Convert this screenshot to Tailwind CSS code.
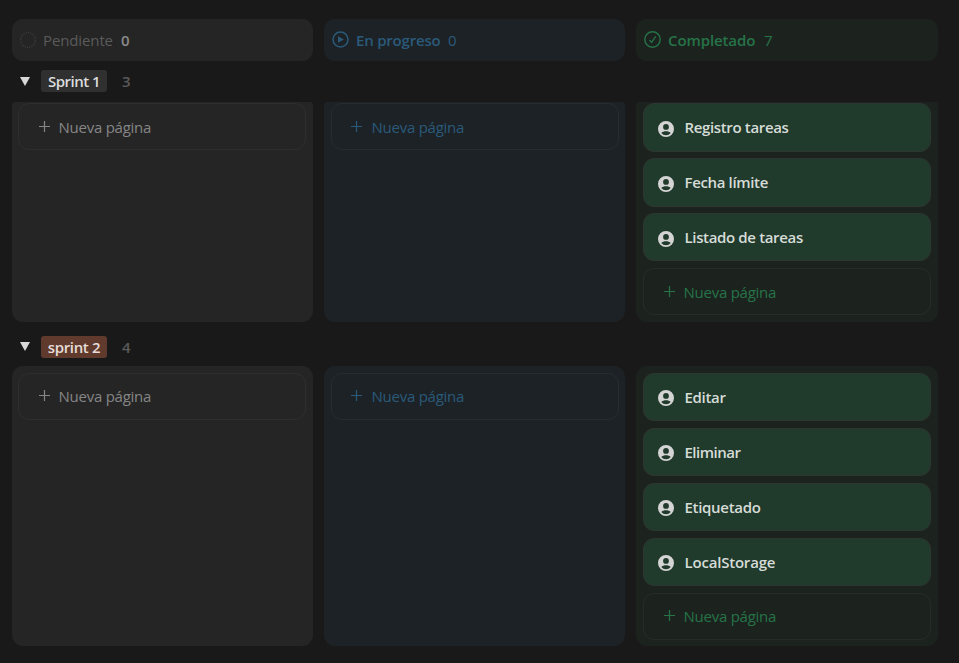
<!DOCTYPE html>
<html lang="es">
<head>
<meta charset="utf-8">
<title>Tablero de sprints</title>
<script src="https://cdn.jsdelivr.net/npm/@tailwindcss/browser@4"></script>
</head>
<body class="bg-[#191919] font-['Open_Sans','Noto_Sans',sans-serif] text-[15px] leading-5 w-[959px] h-[663px] overflow-hidden">
<svg class="hidden">
  <symbol id="plus" viewBox="0 0 10 10"><path d="M5 0v10M0 5h10" stroke="currentColor" stroke-width="1.1" fill="none"/></symbol>
  <symbol id="user" viewBox="0 0 16 16"><path fill-rule="evenodd" fill="currentColor" d="M8 0a8 8 0 1 0 0 16A8 8 0 0 0 8 0Zm0 3a2.900 2.900 0 1 1 0 5.800A2.900 2.900 0 0 1 8 3Zm0 11.200a6.100 6.100 0 0 1-4.700-2.200C4 10.800 6.300 10.200 8 10.200s4 .6 4.700 1.800A6.100 6.100 0 0 1 8 14.200Z"/></symbol>
</svg>
<main class="pt-[19px] pl-3">
  <header class="flex gap-[11px] h-[42px]">
    <div class="w-[301px] rounded-[11px] bg-[#252525] text-[#5a5a5a] flex items-center pl-2">
      <svg class="size-4 text-[#404040]" viewBox="0 0 16 16" fill="none" stroke="currentColor"><circle cx="8" cy="8" r="7.400" stroke-width="1.100" stroke-dasharray="1.2 1.1"/></svg>
      <span class="ml-[7px] w-[78px] font-medium tracking-[-0.120px]">Pendiente</span><span class="text-[#8a8a8a] font-semibold">0</span>
    </div>
    <div class="w-[301px] rounded-[11px] bg-[#1d2226] text-[#2a5a7a] flex items-center pl-2">
      <svg class="size-[17px] -mt-px" viewBox="0 0 17 17" fill="none" stroke="currentColor"><circle cx="8.500" cy="8.500" r="7.500" stroke-width="1.500"/><path d="M6 5.200v6.600l5.800-3.300z" fill="currentColor" stroke="none"/></svg>
      <span class="ml-[7px] w-[92px] font-semibold tracking-[-0.200px]">En progreso</span><span>0</span>
    </div>
    <div class="w-[302px] rounded-[11px] bg-[#1c231f] text-[#267348] flex items-center pl-2">
      <svg class="size-[17px] -mt-px" viewBox="0 0 17 17" fill="none" stroke="currentColor"><circle cx="8.500" cy="8.500" r="7.700" stroke-width="1.400"/><path d="m5.500 9 2.200 2.400 4-6" stroke-width="1.300"/></svg>
      <span class="ml-[7px] w-[96px] font-semibold tracking-[-0.100px]">Completado</span><span>7</span>
    </div>
  </header>

  <section>
    <div class="flex items-center h-[41px] pl-2 text-[#5a5a5a]">
      <svg class="w-[10px] h-[9px] text-[#d8d8d8]" viewBox="0 0 10 9"><path d="M0 0h10L5 9z" fill="currentColor"/></svg>
      <span class="ml-[11px] w-[66px] h-[22px] -mt-px leading-[23px] rounded-[3px] bg-[#303030] text-[#dcdcdc] text-center font-semibold tracking-[-0.500px]">Sprint 1</span>
      <span class="ml-[15px] -mt-0.5 font-semibold">3</span>
    </div>
    <div class="flex gap-[11px] h-[220px]">
      <div class="w-[301px] rounded-t-[3px] rounded-b-[11px] bg-[#252525] pt-px pl-[6px]">
        <div class="w-[288px] h-[47px] rounded-[11px] border border-[#2e2e2e] text-[#858585] flex items-center pl-5"><svg class="size-[11px] -mt-px"><use href="#plus"/></svg><span class="ml-[8.500px] tracking-[-0.250px]">Nueva página</span></div>
      </div>
      <div class="w-[301px] rounded-t-[3px] rounded-b-[11px] bg-[#1d2226] pt-px pl-[7px]">
        <div class="w-[288px] h-[47px] rounded-[11px] border border-[#282c2f] text-[#2a5a7a] flex items-center pl-[19px]"><svg class="size-[11px] -mt-px"><use href="#plus"/></svg><span class="ml-[9.500px] tracking-[-0.250px]">Nueva página</span></div>
      </div>
      <div class="w-[302px] rounded-t-[3px] rounded-b-[11px] bg-[#1c231f] pt-px pl-[7px] text-[#d6dcd8] font-semibold tracking-[-0.350px]">
        <div class="w-[288px] h-[49px] rounded-[11px] border border-[#2e3632] bg-[#203a2b] flex items-center pl-[14px]"><svg class="size-4 mt-[3px] text-[#d4d4d4]"><use href="#user"/></svg><span class="ml-[10.500px] -mt-0.5">Registro tareas</span></div>
        <div class="mt-[6px] w-[288px] h-[49px] rounded-[11px] border border-[#2e3632] bg-[#203a2b] flex items-center pl-[14px]"><svg class="size-4 mt-[3px] text-[#d4d4d4]"><use href="#user"/></svg><span class="ml-[10.500px] -mt-0.5">Fecha límite</span></div>
        <div class="mt-[6px] w-[288px] h-[48px] rounded-[11px] border border-[#2e3632] bg-[#203a2b] flex items-center pl-[14px]"><svg class="size-4 mt-[3px] text-[#d4d4d4]"><use href="#user"/></svg><span class="ml-[10.500px]">Listado de tareas</span></div>
        <div class="mt-[7px] w-[288px] h-[47px] rounded-[11px] border border-[#282c29] text-[#267348] font-normal flex items-center pl-5"><svg class="size-[11px] -mt-px"><use href="#plus"/></svg><span class="ml-[8.500px] tracking-[-0.250px]">Nueva página</span></div>
      </div>
    </div>
  </section>

  <section>
    <div class="flex items-center h-[44px] pt-[6px] pl-2 text-[#5a5a5a]">
      <svg class="w-[10px] h-[9px] -mt-0.5 text-[#d8d8d8]" viewBox="0 0 10 9"><path d="M0 0h10L5 9z" fill="currentColor"/></svg>
      <span class="ml-[11px] w-[66px] h-[22px] leading-[23px] rounded-[3px] bg-[#603a2d] text-[#e6ddd9] text-center font-semibold tracking-[-0.350px]">sprint 2</span>
      <span class="ml-[15px] font-semibold">4</span>
    </div>
    <div class="flex gap-[11px] h-[280px]">
      <div class="w-[301px] rounded-[11px] bg-[#252525] pt-[7px] pl-[6px]">
        <div class="w-[288px] h-[47px] rounded-[11px] border border-[#2e2e2e] text-[#858585] flex items-center pl-5 pb-0.5"><svg class="size-[11px]"><use href="#plus"/></svg><span class="ml-[8.500px] tracking-[-0.250px]">Nueva página</span></div>
      </div>
      <div class="w-[301px] rounded-[11px] bg-[#1d2226] pt-[7px] pl-[7px]">
        <div class="w-[288px] h-[47px] rounded-[11px] border border-[#282c2f] text-[#2a5a7a] flex items-center pl-[19px] pb-0.5"><svg class="size-[11px]"><use href="#plus"/></svg><span class="ml-[9.500px] tracking-[-0.250px]">Nueva página</span></div>
      </div>
      <div class="w-[302px] rounded-[11px] bg-[#1c231f] pt-[7px] pl-[7px] flex flex-col gap-[7px] text-[#d6dcd8] font-semibold tracking-[-0.300px]">
        <div class="w-[288px] h-[48px] rounded-[11px] border border-[#2e3632] bg-[#203a2b] flex items-center pl-[14px]"><svg class="size-4 mt-px text-[#d4d4d4]"><use href="#user"/></svg><span class="ml-[10.500px]">Editar</span></div>
        <div class="w-[288px] h-[48px] rounded-[11px] border border-[#2e3632] bg-[#203a2b] flex items-center pl-[14px]"><svg class="size-4 mt-px text-[#d4d4d4]"><use href="#user"/></svg><span class="ml-[10.500px] tracking-[-0.500px]">Eliminar</span></div>
        <div class="w-[288px] h-[48px] rounded-[11px] border border-[#2e3632] bg-[#203a2b] flex items-center pl-[14px]"><svg class="size-4 mt-px text-[#d4d4d4]"><use href="#user"/></svg><span class="ml-[10.500px]">Etiquetado</span></div>
        <div class="w-[288px] h-[48px] rounded-[11px] border border-[#2e3632] bg-[#203a2b] flex items-center pl-[14px]"><svg class="size-4 mt-px text-[#d4d4d4]"><use href="#user"/></svg><span class="ml-[10.500px] tracking-[-0.200px]">LocalStorage</span></div>
        <div class="w-[288px] h-[47px] rounded-[11px] border border-[#282c29] text-[#267348] font-normal flex items-center pl-5 pb-0.5"><svg class="size-[11px]"><use href="#plus"/></svg><span class="ml-[8.500px] tracking-[-0.250px]">Nueva página</span></div>
      </div>
    </div>
  </section>
</main>
</body>
</html>
